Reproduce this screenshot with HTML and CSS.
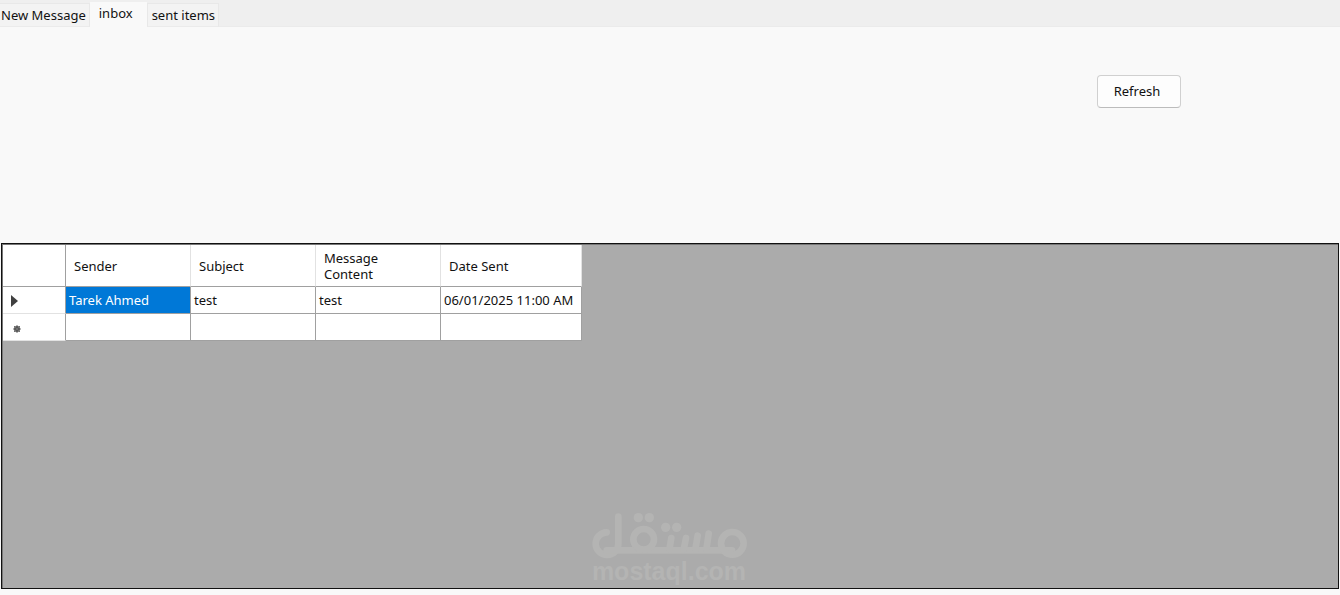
FILE: index.html
```
<!DOCTYPE html>
<html lang="en">
<head>
<meta charset="utf-8">
<title>Messages</title>
<link rel="stylesheet" href="styles.css">
</head>
<body>
<nav class="tabs" role="tablist">
  <button class="tab tab-first" role="tab" aria-selected="false">New Message</button>
  <button class="tab tab-active" role="tab" aria-selected="true">inbox</button>
  <button class="tab" role="tab" aria-selected="false">sent items</button>
</nav>
<main class="page">
  <div class="toolbar"><button class="refresh">Refresh</button></div>
  <section class="grid">
    <table class="messages">
      <colgroup><col class="col-marker"><col class="col-text"><col class="col-text"><col class="col-text"><col class="col-date"></colgroup>
      <thead>
        <tr><td class="marker"></td><th>Sender</th><th>Subject</th><th>Message Content</th><th>Date Sent</th></tr>
      </thead>
      <tbody>
        <tr>
          <td class="marker"><svg class="mark" viewBox="0 0 16 16"><path d="M3 2v12l7-6z"/></svg></td>
          <td class="selected">Tarek Ahmed</td><td>test</td><td>test</td><td>06/01/2025 11:00 AM</td>
        </tr>
        <tr>
          <td class="marker"><svg class="mark" viewBox="0 0 16 16"><circle cx="9" cy="9" r="3"/><path d="M5 9h8M9 5v8M6 6l6 6M12 6l-6 6" stroke="#707070"/></svg></td>
          <td></td><td></td><td></td><td></td>
        </tr>
      </tbody>
    </table>
    <div class="brand">
      <svg class="brand-mark" viewBox="36 36 465 138" role="img" aria-label="مستقل">
        <g fill="none" stroke="currentColor" stroke-width="20" stroke-linecap="round">
          <path d="M80 94A34 34 0 1 0 115 127V47"/>
          <path d="M80 148H456"/>
          <circle cx="457" cy="127" r="34"/>
          <circle cx="191" cy="115" r="31"/>
          <path d="M274 111L268 146M318 111L311 146M353 104L346 146M386 98L379 146"/>
        </g>
        <g fill="currentColor"><circle cx="175" cy="50" r="14"/><circle cx="208" cy="50" r="14"/><circle cx="257" cy="79" r="14"/><circle cx="290" cy="79" r="14"/></g>
      </svg>
      <span class="brand-name">mostaql.com</span>
    </div>
  </section>
</main>
</body>
</html>
```
FILE: styles.css
```
* { box-sizing: border-box; }
body {
  display: flex;
  flex-direction: column;
  min-height: 100vh;
  margin: 0;
  background: #f9f9f9;
  color: #111;
  font: 13px/16px "Noto Sans", sans-serif;
}
button { font: inherit; color: inherit; }
.tabs {
  display: flex;
  align-items: flex-end;
  height: 27px;
  background: linear-gradient(#efefef 26px, #ebebeb 26px);
}
.tab {
  height: 24px;
  padding: 0 3px 0 4px;
  border: 1px solid #e8e8e8;
  border-bottom-color: #ebebeb;
  background: #f3f3f3;
  white-space: nowrap;
}
.tab-first { padding-left: 1px; border-left: 0; }
.tab-active {
  height: 25px;
  padding: 0 13px 3px 8px;
  border-color: #f9f9f9;
  background: #f9f9f9;
}
.page {
  display: flex;
  flex: 1;
  flex-direction: column;
  padding: 48px 1px 6px 1px;
}
.toolbar {
  display: flex;
  justify-content: flex-end;
  height: 168px;
  padding-right: 158px;
}
.refresh {
  width: 84px;
  height: 33px;
  padding: 0 4px 2px 0;
  border: 1px solid #d0d0d0;
  border-bottom-color: #bcbcbc;
  border-radius: 4px;
  background: #fdfdfd;
}
.grid {
  display: flex;
  flex: 1;
  flex-direction: column;
  justify-content: space-between;
  border: 1px solid #111;
  background: #ababab;
  box-shadow: inset 1px 1px #777;
  padding: 1px 0 4px 1px;
}
.messages {
  width: 579px;
  table-layout: fixed;
  border-collapse: separate;
  border-spacing: 0;
}
.col-marker { width: 63px; }
.col-text { width: 125px; }
.col-date { width: 141px; }
.messages th, .messages td {
  height: 27px;
  padding: 0 3px;
  border-right: 1px solid #a0a0a0;
  border-bottom: 1px solid #a0a0a0;
  background: #fff;
  text-align: left;
  font-weight: 400;
  white-space: nowrap;
}
.messages th {
  height: 42px;
  padding: 0 48px 0 8px;
  border-right-color: #e2e2e2;
  white-space: normal;
}
.messages thead th:last-child { padding-right: 8px; }
.messages tbody .marker { padding: 1px 0 0 5px; border-bottom-color: #e2e2e2; }
.messages .selected { background: #0078d7; color: #fff; }
.mark { display: block; width: 16px; height: 16px; fill: #404040; }
.brand {
  display: flex;
  flex-direction: column;
  align-items: center;
  padding-right: 3px;
  color: #b4b4b3;
}
.brand-mark { width: 155px; height: 46px; }
.brand-name { font: bold 25px/25px "Liberation Sans", sans-serif; }
```
